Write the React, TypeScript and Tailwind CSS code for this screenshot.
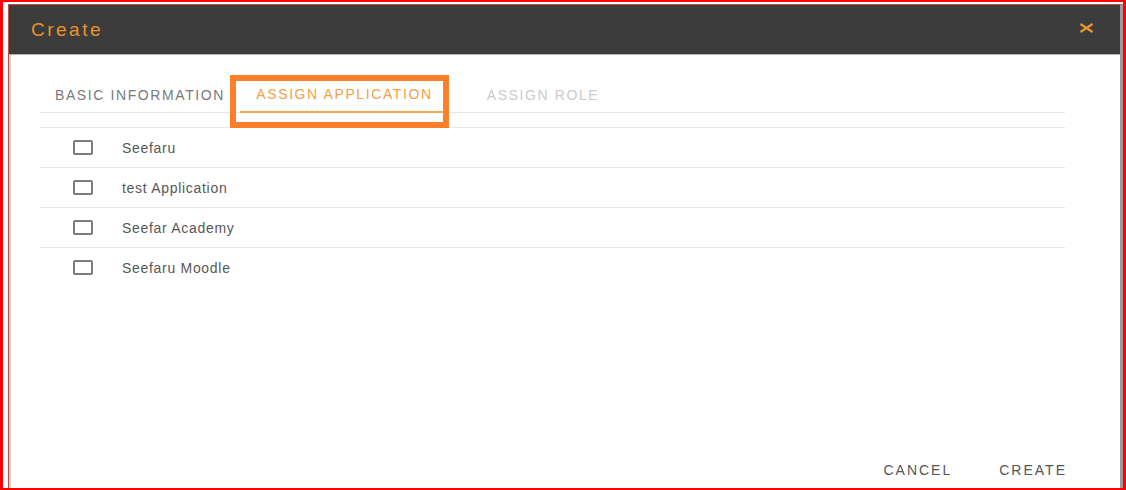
import React from "react";

const apps = ["Seefaru", "test Application", "Seefar Academy", "Seefaru Moodle"];

function Checkbox() {
  return <span className="block w-[20px] h-[15px] border-2 border-[#7d7d7d] rounded-[2px] bg-white" />;
}

export default function App() {
  return (
    <div
      className="relative w-[1126px] h-[490px] overflow-hidden bg-white border-[#ff0000] border-l-[3px] border-t-2 border-r-[3px] border-b-2 font-['Liberation_Sans',Arial,sans-serif]"
    >
      <div className="ml-[5px] mt-[2px] h-[490px] flex flex-col border-l border-t border-[#c94a44] border-r-[3px] border-r-[#9a9a9a]">
        <div className="h-[50px] shrink-0 bg-[#3c3c3c] flex items-center justify-between pl-[22px] pr-[26px] border-b border-[#b4b4b4]">
          <span className="text-[19px] tracking-[2.5px] text-[#e8922c] leading-none">Create</span>
          <svg width="15" height="10" viewBox="0 0 15 10" className="mt-[-3px]">
            <path d="M1.5 1 L13.5 9 M13.5 1 L1.5 9" stroke="#ea962b" strokeWidth="2.2" />
          </svg>
        </div>
        <div className="flex-1 flex flex-col border-l-2 border-[#d2d2d2] pl-[29px] pr-[55px] pt-[19px]">
          <div className="flex h-[39px] border-b border-[#e6e6e6] text-[14px] tracking-[1.6px] leading-none">
            <div className="w-[200px] h-[39px] -mb-px flex items-center justify-center pt-[2px] text-[#7a7a7a]">
              BASIC INFORMATION
            </div>
            <div className="w-[203px] h-[39px] -mb-px flex items-center justify-center pt-[2px] pl-[6px] text-[#f3a04a] border-b-2 border-[#f4a655]">
              ASSIGN APPLICATION
            </div>
            <div className="w-[200px] h-[39px] -mb-px flex items-center justify-center pt-[2px] text-[#cbcbcb]">
              ASSIGN ROLE
            </div>
          </div>
          <div className="mt-[14px] flex flex-col">
            {apps.map((a) => (
              <div key={a} className="h-[40px] border-t border-[#e8e8e8] flex items-center pl-[33px]">
                <Checkbox />
                <span className="ml-[29px] text-[14px] tracking-[0.7px] text-[#585858] leading-none">{a}</span>
              </div>
            ))}
          </div>
          <div className="mt-auto mb-[6px] -mr-[2px] h-[36px] flex items-center justify-end gap-[47px] text-[14px] tracking-[2px] text-[#555555] leading-none">
            <span>CANCEL</span>
            <span>CREATE</span>
          </div>
        </div>
      </div>
      <div className="absolute left-[227px] top-[73px] w-[219px] h-[53px] border-[6px] border-[#fd7f2a] pointer-events-none" />
    </div>
  );
}
